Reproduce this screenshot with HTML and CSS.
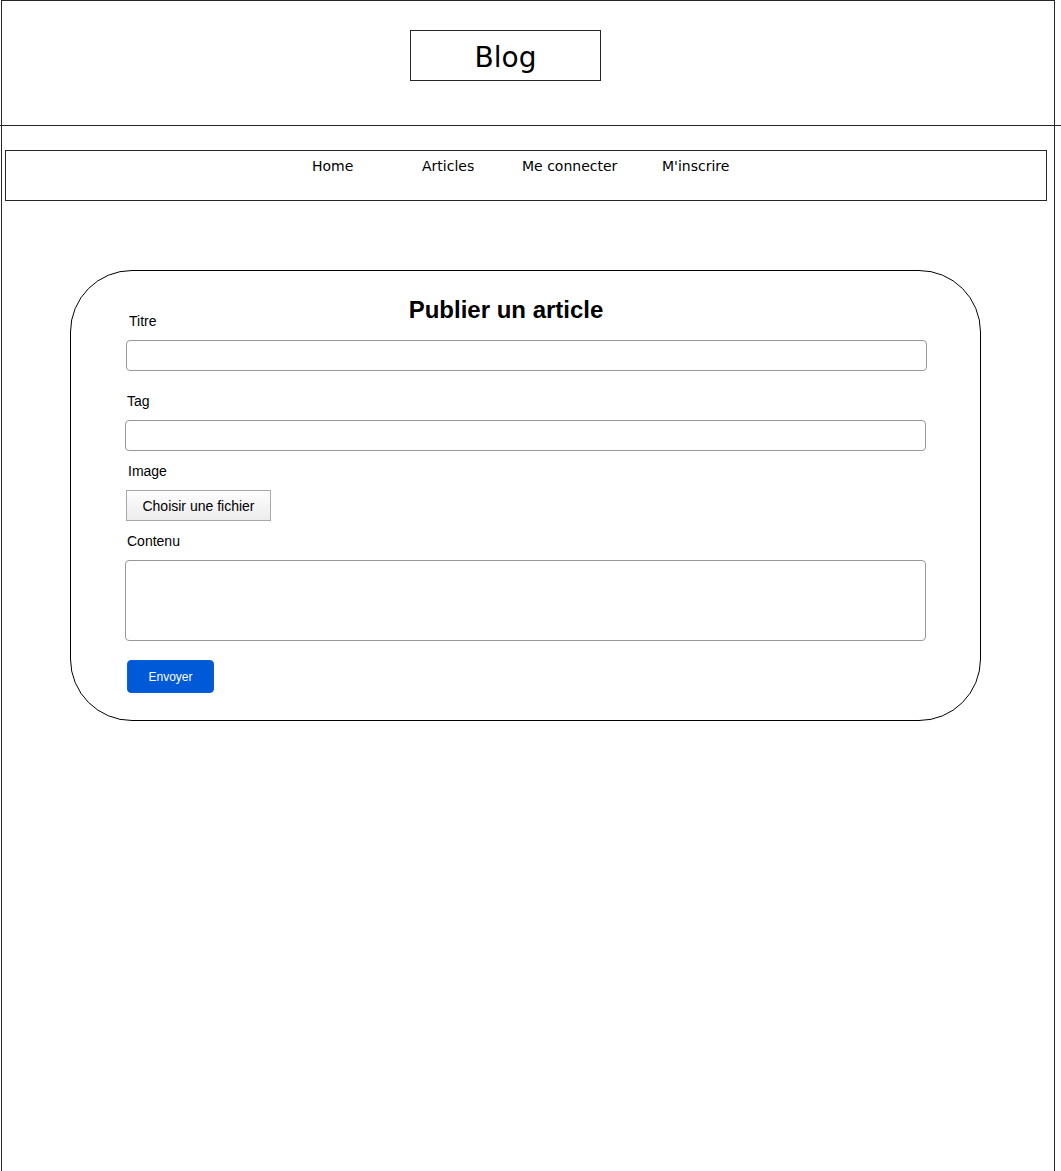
FILE: index.html
```html
<!DOCTYPE html>
<html lang="fr">
<head>
<meta charset="utf-8">
<title>Blog</title>
<link rel="stylesheet" href="styles.css">
</head>
<body>
<div class="page">
  <header class="header">
    <div class="logo">Blog</div>
  </header>
  <nav class="nav">
    <a class="nav-item w-home">Home</a>
    <a class="nav-item w-articles">Articles</a>
    <a class="nav-item w-login">Me connecter</a>
    <a class="nav-item">M'inscrire</a>
  </nav>
  <main class="card">
    <h1 class="card-title">Publier un article</h1>
    <label class="lbl lbl-titre">Titre</label>
    <input class="field f-titre" type="text">
    <label class="lbl lbl-tag">Tag</label>
    <input class="field f-tag" type="text">
    <label class="lbl lbl-image">Image</label>
    <button class="file-btn" type="button">Choisir une fichier</button>
    <label class="lbl lbl-contenu">Contenu</label>
    <textarea class="field area"></textarea>
    <button class="send" type="button">Envoyer</button>
  </main>
</div>
</body>
</html>
```
FILE: styles.css
```css
* { box-sizing: border-box; }
html, body { margin: 0; padding: 0; background: #fff; }
body { font-family: "DejaVu Sans", Verdana, sans-serif; color: #000; }

.page {
  position: relative;
  width: 1061px;
  height: 1171px;
  overflow: hidden;
}
.page::before {
  content: "";
  position: absolute;
  left: 1px; top: 0;
  width: 1052px; height: 1171px;
  border: 1px solid #262626;
  pointer-events: none;
}

.header {
  height: 126px;
  padding-top: 30px;
  border-bottom: 1px solid #262626;
}
.logo {
  margin-left: 410px;
  width: 191px;
  height: 51px;
  border: 1px solid #262626;
  font-size: 28px;
  line-height: 53px;
  text-align: center;
}

.nav {
  display: flex;
  margin: 24px 0 0 5px;
  width: 1042px;
  height: 51px;
  border: 1px solid #262626;
  padding: 7px 0 0 306px;
  font-size: 14px;
  line-height: 17px;
}
.nav-item { display: block; color: #000; }
.w-home { width: 110px; }
.w-articles { width: 100px; }
.w-login { width: 140px; }

.card {
  display: flex;
  flex-direction: column;
  align-items: flex-start;
  margin: 69px 0 0 70px;
  width: 911px;
  height: 451px;
  border: 1px solid #000;
  border-radius: 62px;
  padding: 27px 0 0 55px;
  font-family: "Liberation Sans", Arial, Helvetica, sans-serif;
}
.card-title {
  align-self: stretch;
  margin: 0 0 0 -55px;
  font-size: 24px;
  line-height: 24px;
  font-weight: bold;
  text-align: center;
  padding-right: 39px;
}
.lbl {
  display: block;
  font-size: 14px;
  line-height: 16px;
}
.lbl-titre { margin: -9px 0 0 3px; }
.lbl-tag { margin: 22px 0 0 1px; }
.lbl-image { margin: 12px 0 0 2px; }
.lbl-contenu { margin: 12px 0 0 1px; }

.field {
  display: block;
  width: 801px;
  border: 1px solid #989898;
  border-radius: 4px;
  background: #fff;
  margin: 11px 0 0 -1px;
  padding: 0 6px;
  font: 14px "Liberation Sans", Arial, sans-serif;
}
.f-titre { height: 31px; margin-left: 0; }
.f-tag { height: 31px; }
.area { height: 81px; resize: none; }

.file-btn {
  margin: 11px 0 0 0;
  width: 145px;
  height: 31px;
  border: 1px solid #a8a8a8;
  border-radius: 0;
  background: linear-gradient(#fdfdfd, #ececec);
  font: 14px "Liberation Sans", Arial, sans-serif;
  color: #000;
  padding: 0;
}
.send {
  margin: 19px 0 0 1px;
  width: 87px;
  height: 33px;
  border: 1px solid #0b5fd8;
  border-radius: 4px;
  background: #0059d6;
  color: #fff;
  font: 12px "Liberation Sans", Arial, sans-serif;
  padding: 0;
}
```
